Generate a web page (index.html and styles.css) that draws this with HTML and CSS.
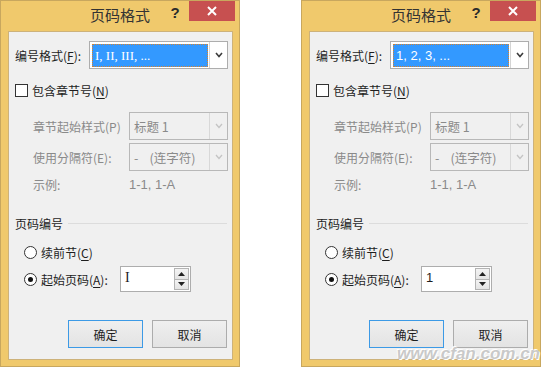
FILE: index.html
```html
<!DOCTYPE html>
<html lang="zh-CN">
<head>
  <meta charset="UTF-8" />
  <title>页码格式</title>
  <link rel="stylesheet" href="styles.css">
</head>
<body>
  <div class="page">

    <!-- Roman numbering -->
    <div class="dialog">
      <div class="titlebar">
        <div class="title">页码格式</div>
        <div class="help">?</div>
        <div class="close">
          <svg width="10" height="10" viewBox="0 0 10 10"><path d="M1 1 L9 9 M9 1 L1 9" stroke="#fff" stroke-width="2"/></svg>
        </div>
      </div>
      <div class="panel">
        <div class="row-format">
          <span class="label-format">编号格式(<u>F</u>):</span>
          <div class="combo combo-active">
            <div class="combo-value"><span class="selected serif">I, II, III, ...</span></div>
            <div class="combo-btn">
              <svg width="8" height="6" viewBox="0 0 8 6"><path d="M1 1 L4 4.5 L7 1" fill="none" stroke="#3c3c3c" stroke-width="1.6"/></svg>
            </div>
          </div>
        </div>

        <div class="row-check">
          <span class="checkbox"></span>
          <span class="check-label">包含章节号(<u>N</u>)</span>
        </div>

        <div class="row-sub first">
          <span class="label-sub">章节起始样式(P)</span>
          <div class="combo combo-disabled">
            <div class="combo-value"><span class="plain">标题 1</span></div>
            <div class="combo-btn">
              <svg width="8" height="6" viewBox="0 0 8 6"><path d="M1 1 L4 4.5 L7 1" fill="none" stroke="#c4c4c4" stroke-width="1.3"/></svg>
            </div>
          </div>
        </div>

        <div class="row-sub">
          <span class="label-sub">使用分隔符(E):</span>
          <div class="combo combo-disabled">
            <div class="combo-value"><span class="plain">-&nbsp;&nbsp;&nbsp;&nbsp;(连字符)</span></div>
            <div class="combo-btn">
              <svg width="8" height="6" viewBox="0 0 8 6"><path d="M1 1 L4 4.5 L7 1" fill="none" stroke="#c4c4c4" stroke-width="1.3"/></svg>
            </div>
          </div>
        </div>

        <div class="row-example">
          <span class="label-sub">示例:</span>
          <span class="example-value">1-1, 1-A</span>
        </div>

        <div class="section">
          <span>页码编号</span>
          <span class="section-line"></span>
        </div>

        <div class="row-radio">
          <span class="radio"></span>
          <span class="radio-label">续前节(<u>C</u>)</span>
        </div>

        <div class="row-radio row-start">
          <span class="radio checked"></span>
          <span class="radio-label label-start">起始页码(<u>A</u>):</span>
          <div class="spin">
            <span class="spin-value serif">I</span>
            <div class="spin-btns">
              <span class="spin-btn"><svg width="7" height="4" viewBox="0 0 7 4"><path d="M0 4 L3.5 0 L7 4 Z" fill="#222"/></svg></span>
              <span class="spin-btn"><svg width="7" height="4" viewBox="0 0 7 4"><path d="M0 0 L3.5 4 L7 0 Z" fill="#222"/></svg></span>
            </div>
          </div>
        </div>

        <div class="buttons">
          <button class="btn btn-default">确定</button>
          <button class="btn">取消</button>
        </div>
      </div>
    </div>

    <!-- Arabic numbering -->
    <div class="dialog">
      <div class="titlebar">
        <div class="title">页码格式</div>
        <div class="help">?</div>
        <div class="close">
          <svg width="10" height="10" viewBox="0 0 10 10"><path d="M1 1 L9 9 M9 1 L1 9" stroke="#fff" stroke-width="2"/></svg>
        </div>
      </div>
      <div class="panel">
        <div class="row-format">
          <span class="label-format">编号格式(<u>F</u>):</span>
          <div class="combo combo-active">
            <div class="combo-value"><span class="selected">1, 2, 3, ...</span></div>
            <div class="combo-btn">
              <svg width="8" height="6" viewBox="0 0 8 6"><path d="M1 1 L4 4.5 L7 1" fill="none" stroke="#3c3c3c" stroke-width="1.6"/></svg>
            </div>
          </div>
        </div>

        <div class="row-check">
          <span class="checkbox"></span>
          <span class="check-label">包含章节号(<u>N</u>)</span>
        </div>

        <div class="row-sub first">
          <span class="label-sub">章节起始样式(P)</span>
          <div class="combo combo-disabled">
            <div class="combo-value"><span class="plain">标题 1</span></div>
            <div class="combo-btn">
              <svg width="8" height="6" viewBox="0 0 8 6"><path d="M1 1 L4 4.5 L7 1" fill="none" stroke="#c4c4c4" stroke-width="1.3"/></svg>
            </div>
          </div>
        </div>

        <div class="row-sub">
          <span class="label-sub">使用分隔符(E):</span>
          <div class="combo combo-disabled">
            <div class="combo-value"><span class="plain">-&nbsp;&nbsp;&nbsp;&nbsp;(连字符)</span></div>
            <div class="combo-btn">
              <svg width="8" height="6" viewBox="0 0 8 6"><path d="M1 1 L4 4.5 L7 1" fill="none" stroke="#c4c4c4" stroke-width="1.3"/></svg>
            </div>
          </div>
        </div>

        <div class="row-example">
          <span class="label-sub">示例:</span>
          <span class="example-value">1-1, 1-A</span>
        </div>

        <div class="section">
          <span>页码编号</span>
          <span class="section-line"></span>
        </div>

        <div class="row-radio">
          <span class="radio"></span>
          <span class="radio-label">续前节(<u>C</u>)</span>
        </div>

        <div class="row-radio row-start">
          <span class="radio checked"></span>
          <span class="radio-label label-start">起始页码(<u>A</u>):</span>
          <div class="spin">
            <span class="spin-value">1</span>
            <div class="spin-btns">
              <span class="spin-btn"><svg width="7" height="4" viewBox="0 0 7 4"><path d="M0 4 L3.5 0 L7 4 Z" fill="#222"/></svg></span>
              <span class="spin-btn"><svg width="7" height="4" viewBox="0 0 7 4"><path d="M0 0 L3.5 4 L7 0 Z" fill="#222"/></svg></span>
            </div>
          </div>
        </div>

        <div class="buttons">
          <button class="btn btn-default">确定</button>
          <button class="btn">取消</button>
        </div>
      </div>
    </div>

    <!-- Watermark -->
    <div class="watermark">www.cfan.com.cn</div>
  </div>
</body>
</html>
```

FILE: styles.css
```css
body {
  margin: 0;
  background: #fff;
  font-family: "Noto Sans CJK SC", "Liberation Sans", sans-serif;
  font-size: 12px;
  color: #1e1e1e;
}

.page {
  position: relative;
  display: flex;
  gap: 61px;
  width: 545px;
  height: 368px;
}

/* Window frame */
.dialog {
  width: 240px;
  height: 367px;
  box-sizing: border-box;
  display: flex;
  flex-direction: column;
  padding: 0 6px 6px 7px;
  background: #f0c96c;
  border: 1px solid #c8a75e;
}

.titlebar {
  display: flex;
  align-items: flex-start;
  height: 30px;
  flex-shrink: 0;
}

.title {
  flex: 1;
  padding-left: 66px;
  text-align: center;
  font-size: 15px;
  line-height: 28px;
  color: #333;
}

.help {
  width: 18px;
  margin-right: 5px;
  text-align: center;
  font-family: "Liberation Sans", sans-serif;
  font-weight: bold;
  font-size: 15px;
  line-height: 24px;
  color: #2b2b2b;
}

.close {
  width: 46px;
  height: 20px;
  margin-right: -2px;
  display: flex;
  align-items: center;
  justify-content: center;
  background: #c75050;
}

/* Client area */
.panel {
  flex: 1;
  display: flex;
  flex-direction: column;
  padding: 9px 4px 0 6px;
  background: #f0f0f0;
  border: 1px solid #cdb27a;
}

.panel u {
  text-underline-offset: 2px;
}

.row-format {
  display: flex;
  align-items: center;
  height: 28px;
}

.label-format {
  width: 74px;
}

.combo {
  display: flex;
  height: 28px;
  box-sizing: border-box;
  border: 1px solid #adadad;
}

.combo-active {
  width: 139px;
  background: #fff;
}

.combo-disabled {
  width: 99px;
  background: #f0f0f0;
  border-color: #b8b8b8;
  color: #8a8a8a;
}

.combo-value {
  flex: 1;
  display: flex;
  padding: 2px 1px 1px 2px;
}

.selected {
  flex: 1;
  display: flex;
  align-items: center;
  padding-left: 2px;
  background: #3399ff;
  border: 1px dotted #d9822b;
  color: #fff;
  font-family: "Liberation Sans", sans-serif;
  font-size: 13px;
}

.serif {
  font-family: "Liberation Serif", serif;
}

.plain {
  display: flex;
  align-items: center;
  padding-left: 2px;
  font-size: 12.5px;
}

.combo-btn {
  width: 17px;
  display: flex;
  align-items: center;
  justify-content: center;
  border-left: 1px solid #d4d4d4;
}

.combo-disabled .combo-btn {
  border-left-color: #d8d8d8;
}

.row-check {
  display: flex;
  align-items: center;
  height: 14px;
  margin-top: 14px;
}

.checkbox {
  width: 11px;
  height: 11px;
  border: 1px solid #333;
  background: #fff;
}

.check-label {
  margin-left: 4px;
}

.row-sub {
  display: flex;
  align-items: center;
  height: 28px;
  margin-top: 3px;
  padding-left: 18px;
  color: #8a8a8a;
}

.row-sub.first {
  margin-top: 15px;
}

.label-sub {
  width: 96px;
}

.row-example {
  display: flex;
  align-items: center;
  height: 16px;
  margin-top: 5px;
  padding-left: 18px;
  color: #8a8a8a;
}

.example-value {
  font-family: "Liberation Sans", sans-serif;
  font-size: 13px;
}

.section {
  display: flex;
  align-items: center;
  height: 16px;
  margin-top: 23px;
}

.section-line {
  flex: 1;
  height: 1px;
  margin: 1px 1px 0 5px;
  background: #dcdcdc;
}

.row-radio {
  display: flex;
  align-items: center;
  height: 16px;
  margin-top: 13px;
  padding-left: 9px;
}

.row-start {
  height: 26px;
  margin-top: 6px;
}

.radio {
  width: 11px;
  height: 11px;
  display: flex;
  align-items: center;
  justify-content: center;
  border: 1px solid #333;
  border-radius: 50%;
  background: #fff;
}

.radio.checked::after {
  content: "";
  width: 5px;
  height: 5px;
  border-radius: 50%;
  background: #111;
}

.radio-label {
  margin-left: 4px;
}

.label-start {
  width: 79px;
}

.spin {
  display: flex;
  width: 71px;
  height: 26px;
  box-sizing: border-box;
  border: 1px solid #adadad;
  background: #fff;
}

.spin-value {
  flex: 1;
  padding-left: 4px;
  line-height: 22px;
  font-family: "Liberation Sans", sans-serif;
  font-size: 13px;
}

.spin-value.serif {
  font-family: "Liberation Serif", serif;
  font-size: 14px;
}

.spin-btns {
  display: flex;
  flex-direction: column;
  margin: 1px 1px 1px 0;
}

.spin-btn {
  width: 13px;
  height: 10px;
  display: flex;
  align-items: center;
  justify-content: center;
  border: 1px solid #b4b4b4;
  background: linear-gradient(#f4f4f4, #e4e4e4);
}

.spin-btn + .spin-btn {
  border-top: none;
}

.buttons {
  display: flex;
  justify-content: flex-end;
  gap: 9px;
  margin: 28px 1px 0 0;
}

.btn {
  width: 75px;
  height: 28px;
  padding: 0;
  font-family: "Noto Sans CJK SC", sans-serif;
  font-size: 12px;
  color: #1e1e1e;
  background: linear-gradient(#efefef, #e3e3e3);
  border: 1px solid #acacac;
}

.btn-default {
  border-color: #3c9ae6;
}

/* Site watermark over the second dialog */
.watermark {
  position: absolute;
  right: 5px;
  bottom: 4px;
  font-family: "Liberation Sans", sans-serif;
  font-size: 17px;
  font-style: italic;
  font-weight: bold;
  color: #c9c9c9;
  text-shadow: 1px 1px 0 #fff, -1px -1px 0 #fff;
}
```
